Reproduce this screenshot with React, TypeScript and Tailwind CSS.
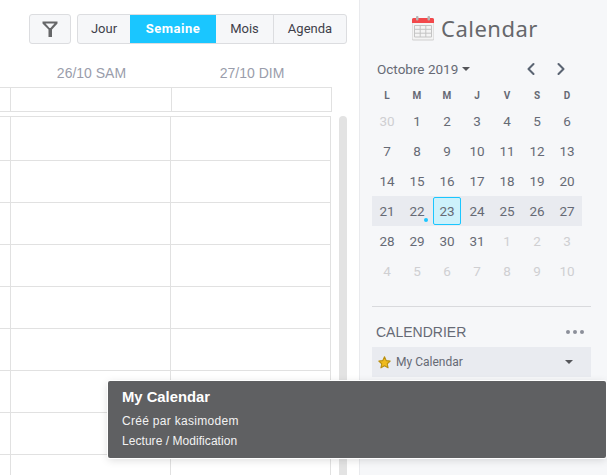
import { ChevronLeft, ChevronRight } from "lucide-react";

const weekdays = ["L", "M", "M", "J", "V", "S", "D"];

const weeks = [
  [30, 1, 2, 3, 4, 5, 6],
  [7, 8, 9, 10, 11, 12, 13],
  [14, 15, 16, 17, 18, 19, 20],
  [21, 22, 23, 24, 25, 26, 27],
  [28, 29, 30, 31, 1, 2, 3],
  [4, 5, 6, 7, 8, 9, 10],
];

function isMuted(week: number, day: number) {
  return (week === 0 && day > 20) || (week >= 4 && day < 20);
}

function CalendarIcon() {
  return (
    <svg width="24" height="26" viewBox="0 0 24 26" className="shrink-0">
      <rect x="1" y="3" width="22" height="22.500" rx="1.500" fill="#cfcfcf" />
      <rect x="1.500" y="3" width="21" height="21.500" rx="1" fill="#f4f4f4" />
      <path d="M1 4.500A1.500 1.500 0 0 1 2.500 3h19A1.500 1.500 0 0 1 23 4.500V8H1z" fill="#f2484b" />
      <rect x="5" y="1" width="2.500" height="4.500" rx="1" fill="#b5b5b5" />
      <rect x="16.500" y="1" width="2.500" height="4.500" rx="1" fill="#b5b5b5" />
      <path
        d="M3.500 10.500h17v11.500h-17zM3.500 14.300h17M3.500 18.200h17M9.200 10.500v11.500M14.800 10.500v11.500"
        fill="none"
        stroke="#c4c4c4"
        strokeWidth="1"
      />
    </svg>
  );
}

function FilterIcon() {
  return (
    <svg width="16" height="16" viewBox="0 0 16 16">
      <path d="M0.500 0.500h15v2L10 8.500V16H6.500V8.500L0.500 2.500z" fill="#666769" />
      <path d="M3.500 2.500h9L8.500 7h-1z" fill="#f6f7f9" />
    </svg>
  );
}

function StarIcon() {
  return (
    <svg width="13" height="13" viewBox="0 0 24 24">
      <path
        d="M12 1.500l3.200 7 7.300.8-5.400 5 1.500 7.500-6.600-3.800-6.600 3.800 1.500-7.500-5.400-5 7.300-.8z"
        fill="#f0bb1c"
        stroke="#b98f10"
        strokeWidth="2"
        strokeLinejoin="round"
      />
    </svg>
  );
}

function Caret({ className }: { className: string }) {
  return (
    <span
      className={`inline-block h-0 w-0 border-x-[4px] border-t-[4px] border-x-transparent ${className}`}
    />
  );
}

function Toolbar() {
  return (
    <div className="flex h-[44px] items-end pl-[29px] text-[13px] text-[#3f3f4a]">
      <button className="mr-[6px] flex h-[30px] w-[42px] items-center justify-center rounded-[3px] border border-[#dcdde0] bg-[#f6f7f9]">
        <FilterIcon />
      </button>
      <div className="flex h-[30px] w-[270px] rounded-[3px] border border-[#dcdde0] bg-[#f6f7f9]">
        <div className="flex w-[52px] items-center justify-center">Jour</div>
        <div className="flex w-[86px] items-center justify-center bg-[#1ac6ff] font-bold tracking-[0.5px] text-white">
          Semaine
        </div>
        <div className="flex w-[57px] items-center justify-center">Mois</div>
        <div className="flex flex-1 items-center justify-center border-l border-[#dcdde0]">
          Agenda
        </div>
      </div>
    </div>
  );
}

function WeekGrid() {
  return (
    <div className="flex h-[359px] items-start">
      <div className="h-[359px] w-[331px] overflow-hidden border-t border-r border-[#e1e1e1]">
        {Array.from({ length: 9 }).map((_, i) => (
          <div
            key={i}
            className={`flex border-b border-[#e1e1e1] ${i === 0 ? "h-[44px]" : "h-[42px]"}`}
          >
            <div className="w-[10px]" />
            <div className="w-[161px] border-x border-[#e1e1e1]" />
            <div className="flex-1" />
          </div>
        ))}
      </div>
      <div className="ml-[8px] h-[359px] w-[8px] rounded-t-[4px] bg-[#e3e3e3]" />
    </div>
  );
}

function MiniCalendar() {
  return (
    <div className="mt-[18px] px-[12px]">
      <div className="flex h-[20px] items-center justify-between pr-[24px]">
        <div className="flex items-center gap-[4px] pl-[5px] text-[13.5px] text-[#666a75]">
          Octobre 2019
          <Caret className="border-t-[#55565a]" />
        </div>
        <div className="flex items-center gap-[10px] text-[#5a6472]">
          <ChevronLeft size={20} strokeWidth={2.5} />
          <ChevronRight size={20} strokeWidth={2.5} />
        </div>
      </div>
      <div className="mt-[6px] grid h-[20px] w-[210px] grid-cols-7 items-center text-center text-[10px] font-bold text-[#666a75]">
        {weekdays.map((d, i) => (
          <div key={i}>{d}</div>
        ))}
      </div>
      <div className="mt-[1px] w-[210px] text-[13.5px]">
        {weeks.map((week, w) => (
          <div
            key={w}
            className={`grid h-[30px] grid-cols-7 items-center text-center ${w === 3 ? "bg-[#e9ebf0]" : ""}`}
          >
            {week.map((day, d) => {
              const today = w === 3 && day === 23;
              return (
                <div
                  key={d}
                  className={`relative mx-auto flex h-[28px] w-[28px] items-center justify-center rounded-[2px] ${
                    today ? "border border-[#1ac6ff] bg-[#cdf1fb]" : ""
                  } ${isMuted(w, day) ? "text-[#cfcfd2]" : "text-[#666a75]"}`}
                >
                  {day}
                  {w === 3 && day === 22 && (
                    <span className="absolute right-[3px] bottom-[3px] h-[4px] w-[4px] rounded-full bg-[#1ac6ff]" />
                  )}
                </div>
              );
            })}
          </div>
        ))}
      </div>
    </div>
  );
}

function CalendarList() {
  return (
    <div className="mx-[12px] mt-[20px] w-[219px] border-t border-[#d9dadd]">
      <div className="flex h-[40px] items-center justify-between pt-[10px] pr-[7px] pl-[4px] text-[14px] text-[#666a75]">
        <span className="font-['Liberation_Sans',sans-serif]">CALENDRIER</span>
        <div className="flex gap-[3px]">
          <span className="h-[4px] w-[4px] rounded-full bg-[#8c8f9a]" />
          <span className="h-[4px] w-[4px] rounded-full bg-[#8c8f9a]" />
          <span className="h-[4px] w-[4px] rounded-full bg-[#8c8f9a]" />
        </div>
      </div>
      <div className="flex h-[30px] items-center bg-[#e9ebf0] pr-[18px] pl-[6px] text-[12px] text-[#666a75]">
        <StarIcon />
        <span className="ml-[5px] flex-1">My Calendar</span>
        <Caret className="border-t-[#55565a]" />
      </div>
    </div>
  );
}

export default function App() {
  return (
    <div className="relative flex h-[475px] w-[607px] overflow-hidden bg-white font-['Roboto',sans-serif]">
      <main className="w-[359px] shrink-0">
        <Toolbar />
        <div className="flex h-[43px] items-center pt-[15px] font-['Liberation_Sans',sans-serif] text-[14px] text-[#9a9dab]">
          <div className="ml-[11px] w-[161px] text-center">26/10 SAM</div>
          <div className="w-[160px] text-center">27/10 DIM</div>
        </div>
        <div className="flex h-[25px] w-[332px] border-y border-r border-[#e1e1e1]">
          <div className="w-[10px]" />
          <div className="w-[162px] border-x border-[#e1e1e1]" />
        </div>
        <div className="mt-[4px]">
          <WeekGrid />
        </div>
      </main>
      <aside className="flex-1 border-l border-[#e9eaed] bg-[#f6f7f9]">
        <div className="flex h-[26px] translate-y-[15px] items-center pl-[51px] font-['Noto_Sans',sans-serif] text-[22px] tracking-[0.5px] text-[#66676b]">
          <CalendarIcon />
          <span className="ml-[6px]">Calendar</span>
        </div>
        <div className="pt-[15px]">
          <MiniCalendar />
          <CalendarList />
        </div>
      </aside>
      <div className="absolute top-[381px] left-[108px] h-[77px] w-[498px] rounded-[2px] bg-[#5f6062] pt-[6px] pl-[14px] font-['Liberation_Sans',sans-serif] text-[12px] text-[#f2f2f2] shadow-[0_0_0_1px_#ffffff,0_2px_8px_rgba(0,0,0,0.15)]">
        <div className="text-[14.8px] leading-[20px] font-bold text-white">My Calendar</div>
        <div className="mt-[4px] leading-[20px] tracking-[0.3px]">Créé par kasimodem</div>
        <div className="leading-[20px] tracking-[0.05px]">Lecture / Modification</div>
      </div>
    </div>
  );
}
